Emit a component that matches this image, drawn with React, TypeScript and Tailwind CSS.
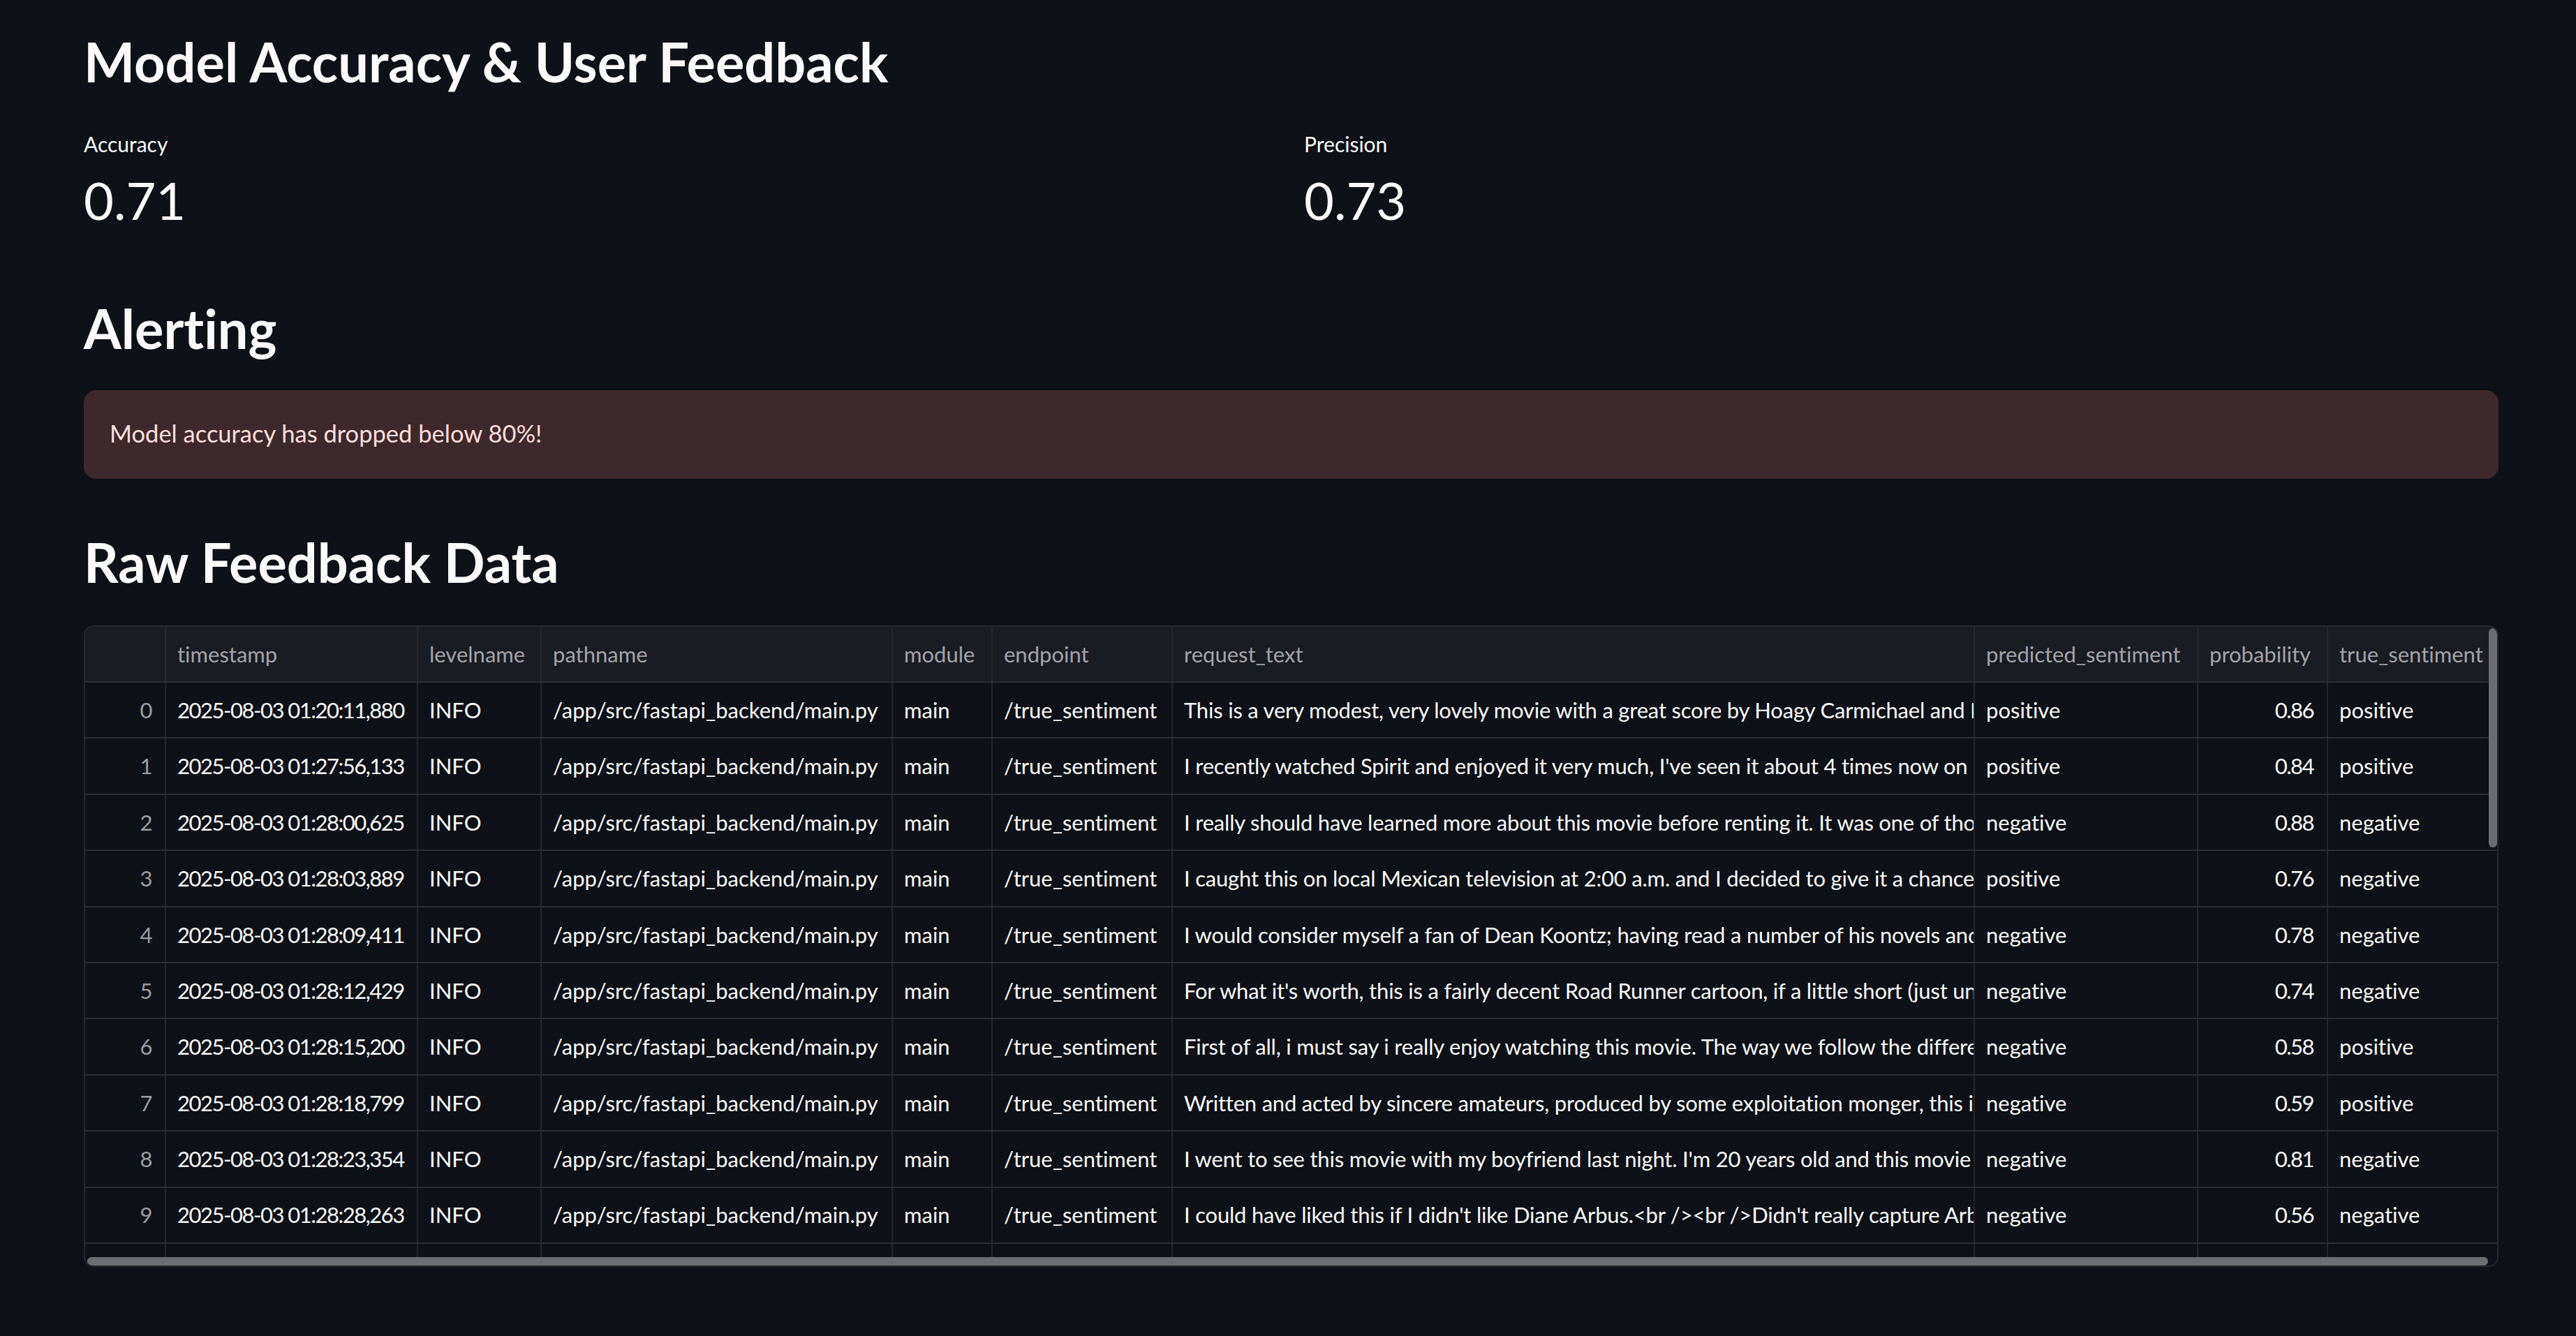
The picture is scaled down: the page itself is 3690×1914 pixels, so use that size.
import React from "react";

type Row = {
  ts: string;
  text: string;
  pred: string;
  prob: string;
  truth: string;
};

const rows: Row[] = [
  { ts: "2025-08-03 01:20:11,880", text: "This is a very modest, very lovely movie with a great score by Hoagy Carmichael and I think it is one of the best of its kind", pred: "positive", prob: "0.86", truth: "positive" },
  { ts: "2025-08-03 01:27:56,133", text: "I recently watched Spirit and enjoyed it very much, I've seen it about 4 times now on DVD and every time it gets better", pred: "positive", prob: "0.84", truth: "positive" },
  { ts: "2025-08-03 01:28:00,625", text: "I really should have learned more about this movie before renting it. It was one of those films that you just cannot stand", pred: "negative", prob: "0.88", truth: "negative" },
  { ts: "2025-08-03 01:28:03,889", text: "I caught this on local Mexican television at 2:00 a.m. and I decided to give it a chance because there was nothing else on", pred: "positive", prob: "0.76", truth: "negative" },
  { ts: "2025-08-03 01:28:09,411", text: "I would consider myself a fan of Dean Koontz; having read a number of his novels and short stories over the years", pred: "negative", prob: "0.78", truth: "negative" },
  { ts: "2025-08-03 01:28:12,429", text: "For what it's worth, this is a fairly decent Road Runner cartoon, if a little short (just under six minutes long)", pred: "negative", prob: "0.74", truth: "negative" },
  { ts: "2025-08-03 01:28:15,200", text: "First of all, i must say i really enjoy watching this movie. The way we follow the different characters is great", pred: "negative", prob: "0.58", truth: "positive" },
  { ts: "2025-08-03 01:28:18,799", text: "Written and acted by sincere amateurs, produced by some exploitation monger, this is a movie that nobody should see", pred: "negative", prob: "0.59", truth: "positive" },
  { ts: "2025-08-03 01:28:23,354", text: "I went to see this movie with my boyfriend last night. I'm 20 years old and this movie          was a total waste of time", pred: "negative", prob: "0.81", truth: "negative" },
  { ts: "2025-08-03 01:28:28,263", text: "I could have liked this if I didn't like Diane Arbus.<br /><br />Didn't really capture Arbus' work or her life at all", pred: "negative", prob: "0.56", truth: "negative" },
];

const grid =
  "grid grid-cols-[116px_361px_177px_503px_143px_258px_1149px_320px_186px_241px]";
const vline = "border-r-2 border-[#25272d]";
const cell = "flex items-center overflow-hidden whitespace-nowrap pl-[16px]";

function HeaderCell({ children, last, right }: { children?: React.ReactNode; last?: boolean; right?: boolean }) {
  return (
    <div
      className={`${cell} ${last ? "" : vline} ${right ? "justify-end pr-[19px]" : ""} text-[#a3a4a9]`}
    >
      {children}
    </div>
  );
}

function Cell({ children, last, right, muted, num, tight }: { children?: React.ReactNode; last?: boolean; right?: boolean; muted?: boolean; num?: boolean; tight?: boolean }) {
  return (
    <div
      className={`${cell} ${last ? "" : vline} ${right ? "justify-end pr-[19px]" : ""} ${muted ? "text-[#9c9da3]" : "text-[#fafafa]"} ${num ? "tracking-[-1.5px]" : ""} ${tight ? "tracking-[-0.2px]" : ""}`}
    >
      {children}
    </div>
  );
}

export default function App() {
  return (
    <div className="min-h-[1914px] w-full bg-[#0e1117] font-[Lato,sans-serif] text-[#fafafa] [font-variant-ligatures:none]">
      <div className="flex flex-col pl-[120px] pr-[111px]">
        <h1 className="mt-[43px] text-[77.5px] font-bold leading-[91px]">
          Model Accuracy &amp; User Feedback
        </h1>

        <div className="mt-[55px] grid grid-cols-2 gap-[37px]">
          <div className="flex flex-col">
            <div className="text-[30px] leading-[34px]">Accuracy</div>
            <div className="mt-[19px] text-[74px] leading-[89px]">0.71</div>
          </div>
          <div className="flex flex-col">
            <div className="text-[30px] leading-[34px]">Precision</div>
            <div className="mt-[19px] text-[74px] leading-[89px]">0.73</div>
          </div>
        </div>

        <h2 className="mt-[94px] text-[77.5px] font-bold leading-[91px]">
          Alerting
        </h2>

        <div className="mt-[43px] flex h-[127px] items-center rounded-[18px] bg-[#3d292b] pb-[4px] pl-[37px]">
          <span className="text-[34.5px] leading-[40px] text-[#ffdede]">
            Model accuracy has dropped below 80%!
          </span>
        </div>

        <h2 className="mt-[74px] text-[77.5px] font-bold leading-[91px]">
          Raw Feedback Data
        </h2>

        <div className="relative mt-[45px] h-[919px] overflow-hidden rounded-[14px] border-2 border-[#26282e] text-[31px]">
          <div className={`${grid} h-[80px] border-b-2 border-[#2c2e34] bg-[#1a1c23]`}>
            <HeaderCell />
            <HeaderCell>timestamp</HeaderCell>
            <HeaderCell>levelname</HeaderCell>
            <HeaderCell>pathname</HeaderCell>
            <HeaderCell>module</HeaderCell>
            <HeaderCell>endpoint</HeaderCell>
            <HeaderCell>request_text</HeaderCell>
            <HeaderCell>predicted_sentiment</HeaderCell>
            <HeaderCell>probability</HeaderCell>
            <HeaderCell last>true_sentiment</HeaderCell>
          </div>

          {rows.map((r, i) => (
            <div key={i} className={`${grid} h-[80.4px] border-b-2 border-[#2a2c32]`}>
              <Cell right muted num>{i}</Cell>
              <Cell num>{r.ts}</Cell>
              <Cell>INFO</Cell>
              <Cell>/app/src/fastapi_backend/main.py</Cell>
              <Cell>main</Cell>
              <Cell>/true_sentiment</Cell>
              <Cell tight>{r.text}</Cell>
              <Cell>{r.pred}</Cell>
              <Cell right num>{r.prob}</Cell>
              <Cell last>{r.truth}</Cell>
            </div>
          ))}

          <div className={`${grid} h-[80.4px]`}>
            <Cell right muted />
            <Cell />
            <Cell />
            <Cell />
            <Cell />
            <Cell />
            <Cell />
            <Cell />
            <Cell />
            <Cell last />
          </div>

          <div className="absolute right-0 top-[2px] h-[314px] w-[12px] rounded-full bg-[#6b6c71]" />
          <div className="absolute bottom-[0px] left-[3px] right-[13px] h-[12px] rounded-full bg-[#6d6e72]" />
        </div>
      </div>
    </div>
  );
}
